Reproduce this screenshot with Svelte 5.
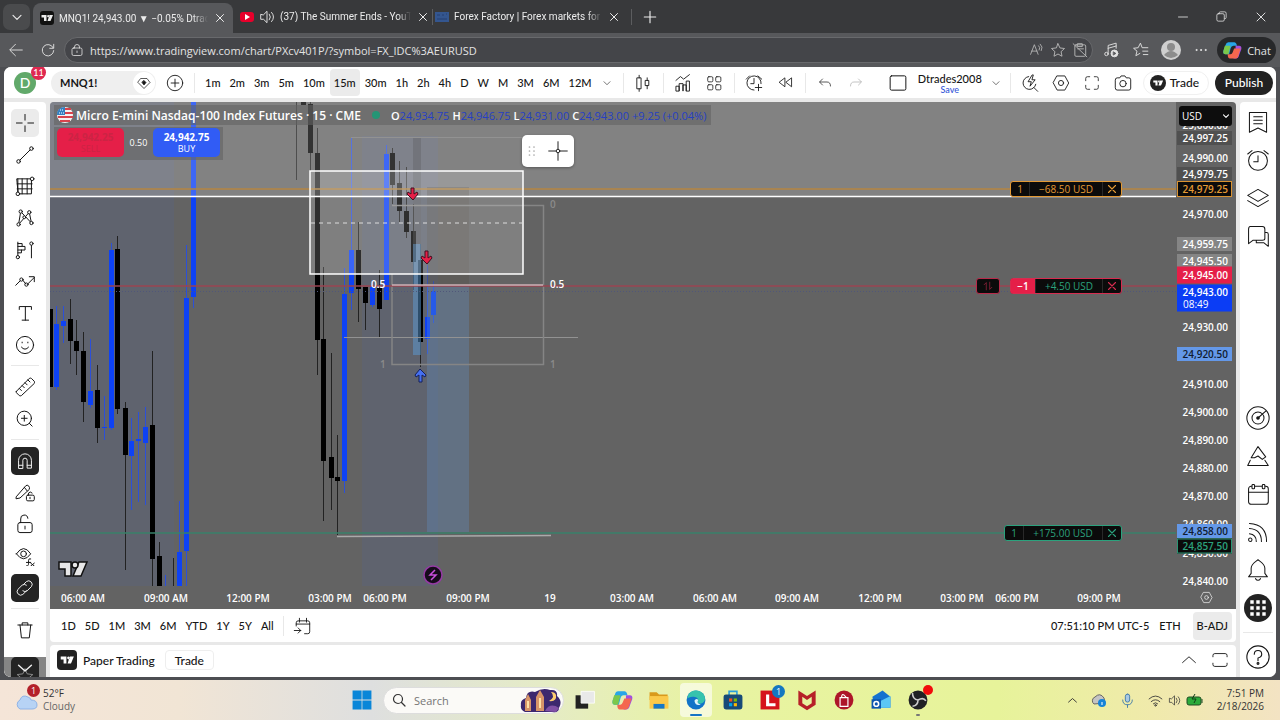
<script lang="ts">
	type Candle = [x: number, high: number, low: number, top: number, bottom: number, up: number];

	let interval = $state("15m");
	let search = $state("");
	let currency = $state("USD");

	const intervals = ["1m", "2m", "3m", "5m", "10m", "15m", "30m", "1h", "2h", "4h", "D", "W", "M", "3M", "6M", "12M"];
	const ranges = ["1D", "5D", "1M", "3M", "6M", "YTD", "1Y", "5Y", "All"];

	// x, high, low, body top, body bottom, up
	const candles: Candle[] = [
		[0, 207, 285, 207, 285, 0],
		[6, 204, 288, 222, 285, 1],
		[13, 204, 241, 219, 224, 1],
		[20, 197, 262, 217, 239, 0],
		[26, 218, 273, 239, 249, 0],
		[33, 230, 320, 249, 300, 0],
		[40, 237, 306, 289, 303, 1],
		[47, 263, 341, 288, 326, 0],
		[54, 294, 338, 325, 326, 1],
		[61, 141, 328, 148, 326, 1],
		[67, 134, 312, 147, 307, 0],
		[75, 300, 468, 306, 353, 0],
		[81, 316, 408, 339, 354, 1],
		[88, 310, 400, 337, 339, 1],
		[95, 305, 403, 325, 341, 1],
		[102, 249, 484, 323, 457, 0],
		[109, 440, 484, 454, 484, 0],
		[115, 473, 484, 484, 484, 1],
		[123, 456, 484, 484, 484, 0],
		[129, 399, 484, 450, 484, 1],
		[136, 143, 484, 196, 449, 1],
		[143, 0, 206, 0, 195, 1],
		[246, 0, 78, 0, 0, 0],
		[253, 0, 3, 0, 3, 0],
		[260, 0, 69, 2, 51, 0],
		[267, 26, 273, 51, 238, 0],
		[273, 165, 419, 237, 359, 0],
		[281, 251, 408, 355, 376, 0],
		[287, 333, 433, 375, 379, 0],
		[294, 166, 391, 192, 379, 1],
		[301, 36, 208, 148, 191, 1],
		[308, 120, 220, 148, 187, 0],
		[315, 185, 228, 185, 201, 0],
		[322, 178, 205, 185, 203, 1],
		[329, 168, 236, 186, 207, 0],
		[336, 43, 198, 52, 198, 1],
		[342, 46, 102, 51, 83, 0],
		[349, 59, 120, 81, 109, 0],
		[356, 65, 136, 109, 130, 0],
		[363, 102, 188, 129, 160, 0],
		[370, 142, 265, 158, 240, 0],
		[377, 163, 252, 215, 237, 1],
		[383, 179, 221, 189, 213, 1]
	];

	const hours: [number, string][] = [
		[33, "06:00 AM"],
		[116, "09:00 AM"],
		[198, "12:00 PM"],
		[280, "03:00 PM"],
		[335, "06:00 PM"],
		[418, "09:00 PM"],
		[500, "19"],
		[582, "03:00 AM"],
		[665, "06:00 AM"],
		[747, "09:00 AM"],
		[830, "12:00 PM"],
		[912, "03:00 PM"],
		[967, "06:00 PM"],
		[1049, "09:00 PM"]
	];

	const prices: [number, string][] = [
		[23, "25,000.00"],
		[56, "24,990.00"],
		[112, "24,970.00"],
		[225, "24,930.00"],
		[282, "24,910.00"],
		[310, "24,900.00"],
		[338, "24,890.00"],
		[366, "24,880.00"],
		[394, "24,870.00"],
		[422, "24,860.00"],
		[451, "24,850.00"],
		[479, "24,840.00"]
	];

	const marks: [number, string, string][] = [
		[36, "24,997.25", "dim"],
		[72, "24,979.75", "dim"],
		[87, "24,979.25", "orange"],
		[142, "24,959.75", "pale"],
		[159, "24,945.50", "pale"],
		[173, "24,945.00", "red"],
		[252, "24,920.50", "sky"],
		[444, "24,857.50", "green"],
		[429, "24,858.00", "sky"]
	];

	const tv = '<path fill="currentColor" stroke="none" d="M3 8h10v12H8v-7H3zM19 8h7l-5 12h-6zM16.500 8a2.300 2.300 0 1 0 .01 0z"/>';

	const icons: Record<string, string> = {
		tv,
		close: '<path d="M7 7l14 14M21 7L7 21"/>',
		down: '<path d="M7 11l7 7 7-7"/>',
		up: '<path d="M4 18l10-9 10 9"/>',
		plus: '<path d="M14 4v20M4 14h20"/>',
		back: '<path d="M25 14H4M13 4L3 14l10 10"/>',
		reload: '<path d="M23 10a10 10 0 1 0 1 5M24 4v7h-7"/>',
		lock: '<rect x="4" y="10" width="20" height="15" rx="3"/><path d="M9 10V8a5 5 0 0 1 10 0v2M14 16v3"/>',
		volume: '<path d="M3 10v8h5l6 6V4l-6 6zM18 9q4 5 0 10M22 6q7 8 0 16"/>',
		read: '<path d="M3 23l7-18 7 18M5 17h10M18 7q4 3 1 8M21 4q6 5 2 12"/>',
		star: '<path d="M14 3l3.400 7.400 8 1-6 5.500 1.600 8L14 21l-7 3.900 1.600-8-6-5.500 8-1z"/>',
		clip: '<rect x="5" y="5" width="19" height="20" rx="2"/><path d="M10 3h8v5h-8zM2 3l24 23M10 12h10"/>',
		music: '<path d="M9 21V6l14-4v9M9 11l14-4"/><circle cx="6" cy="21" r="3"/><circle cx="20" cy="20" r="6" fill="currentColor"/><path stroke="#58595c" fill="#58595c" d="M18.500 17.500l4 2.500-4 2.500z"/>',
		favorites: '<path d="M12 20l-7 4 2-8-6-5 8-1 4-8 3 8h10M17 16h9M18 22h8"/>',
		dots: '<g fill="currentColor"><circle cx="6" cy="14" r="1"/><circle cx="14" cy="14" r="1"/><circle cx="22" cy="14" r="1"/></g>',
		gem: '<path d="M8 5h12l6 8-12 12L2 13z"/><path fill="currentColor" d="M14 9l4 4-4 5-4-5z"/>',
		add: '<circle cx="14" cy="14" r="12"/><path d="M14 8v12M8 14h12"/>',
		candles: '<path d="M5 6h6v17H5zM8 2v4M8 23v4M18 10h5v8h-5zM20.500 6v4M20.500 18v5"/>',
		indicators: '<path d="M3 10l7-6 5 4 9-7M3 26v-7h5v7zM8 26V15h6v11M14 26V17h5v9M19 26V11h5v15z"/>',
		layouts: '<rect x="3" y="3" width="9" height="9" rx="2"/><rect x="17" y="3" width="9" height="9" rx="2"/><rect x="3" y="17" width="9" height="9" rx="2"/><rect x="17" y="17" width="9" height="9" rx="2"/>',
		alertadd: '<path d="M14 25a11 11 0 1 1 11-10M14 7v8h-5M21 16v10M16 21h10M2 8l5-5M20 3l6 5"/>',
		rewind: '<path d="M13 7v14L4 14zM24 7v14l-9-7z"/>',
		undo: '<path d="M9 6l-6 6 6 6M4 12h14q7 0 7 8"/>',
		redo: '<path d="M19 6l6 6-6 6M24 12H10q-7 0-7 8"/>',
		square: '<rect x="3" y="4" width="22" height="20" rx="2"/>',
		quick: '<path d="M12 4a10 10 0 1 0 11 12M20 21l6 6M17 2l-6 10h5l-2 7 8-10h-5l2-7z"/>',
		hex: '<path d="M8 3h12l6 11-6 11H8L2 14z"/><circle cx="14" cy="14" r="4"/>',
		full: '<path d="M3 10V6q0-3 3-3h4M18 3h4q3 0 3 3v4M25 18v4q0 3-3 3h-4M10 25H6q-3 0-3-3v-4"/>',
		camera: '<path d="M2 9q0-3 3-3h4l2-3h6l2 3h4q3 0 3 3v13q0 3-3 3H5q-3 0-3-3z"/><circle cx="14" cy="15" r="5"/>',
		cross: '<path d="M14 2v8M14 18v8M2 14h8M18 14h8"/>',
		line: '<path d="M7 21L21 7"/><circle cx="5" cy="23" r="2.500"/><circle cx="23" cy="5" r="2.500"/>',
		gann: '<path d="M3 4h20v21H5zM3 11h21M3 18h21M10 4v21M17 4v21M4 4v18"/><g fill="#fff"><circle cx="24" cy="4" r="2.500"/><circle cx="4" cy="25" r="2.500"/></g>',
		pattern: '<path d="M5 23L8 5l15 16L20 6 5 23"/><g fill="#fff"><circle cx="8" cy="5" r="2.300"/><circle cx="20" cy="6" r="2.300"/><circle cx="13" cy="13" r="2"/><circle cx="5" cy="23" r="2.300"/><circle cx="23" cy="21" r="2.300"/></g>',
		forecast: '<path d="M4 3v19M4 5h6v4h4v5H4M4 9h6M4 18h5v-4M23 7v18"/><g fill="#fff"><circle cx="4" cy="24" r="2.300"/><circle cx="23" cy="5" r="2.300"/></g>',
		arrows: '<path d="M1 20l6-6M11 13l4 5M18 18l9-9M20 8h7v7"/><circle cx="9" cy="12" r="2.300"/><circle cx="16" cy="19" r="2.300"/>',
		text: '<path d="M6 9V5h17v4M14.500 5v19M10 24h9"/>',
		smile: '<circle cx="14" cy="14" r="12"/><path d="M9 17q5 6 10 0M10 10v1M18 10v1"/>',
		ruler: '<path d="M2 20L20 2q2-1 3 0l4 4q1 1 0 3L9 26q-2 1-3 0l-4-4q-1-1 0-2zM6 16l3 3M10 12l3 3M14 8l3 3M18 4l3 3"/>',
		zoom: '<circle cx="13" cy="13" r="10"/><path d="M13 9v8M9 13h8M20 20l4 4"/>',
		magnet: '<path d="M5 24V13a9 9 0 0 1 18 0v11h-6V13a3 3 0 0 0-6 0v11zM5 20h6M17 20h6"/>',
		penlock: '<path d="M2 19L15 4q2-2 4 0t1 5L7 21l-5 1zM13 6l4 5"/><rect x="16" y="17" width="11" height="8" rx="2"/><path d="M19 17v-3q2-3 5 0M21 20v2"/>',
		unlock: '<rect x="4" y="12" width="20" height="14" rx="3"/><path d="M8 12V7a5 5 0 0 1 10-1M14 17v4"/>',
		eye: '<path d="M2 11q10-15 20 0Q12 25 2 11z"/><circle cx="12" cy="11" r="4"/><path d="M16 28q3 1 3-4v-4q0-3 3-2M16 23h6M22 24l5 4M27 24l-5 4"/>',
		link: '<path d="M12 9l4-4a5 5 0 0 1 7 7l-6 6a5 5 0 0 1-6 0M16 18l-5 5a5 5 0 0 1-7-7l6-6a5 5 0 0 1 6 0"/>',
		trash: '<path d="M4 7h20M7 7l2 18h11l2-18M10 7V4h8v3"/>',
		watch: '<path d="M4 3h20v23l-10-5-10 5zM9 8h10M9 12h10M9 16h10"/>',
		alarm: '<circle cx="14" cy="15" r="11"/><path d="M14 9v7H9M2 7l5-4M21 3l5 4"/>',
		layers: '<path d="M14 4l12 7-12 7L2 11zM2 17l12 7 12-7"/>',
		chat: '<path d="M5 3h14q3 0 3 3v11q0 2-3 2H8l-5 4V6q0-3 2-3zM22 10h2q2 0 2 2v14l-5-4h-9v-3"/>',
		target: '<circle cx="14" cy="14" r="13"/><circle cx="14" cy="14" r="7"/><path d="M14 14l9-8"/><circle cx="14" cy="14" r="1.500" fill="currentColor"/>',
		pyramid: '<path d="M14 3l9 12-4 3-5-4-4 2H6zM5 19l-3 6h24l-4-6"/>',
		calendar: '<rect x="3" y="5" width="23" height="21" rx="3"/><path d="M3 12h23"/><g fill="#fff"><rect x="7" y="3" width="3" height="5" rx="1"/><rect x="19" y="3" width="3" height="5" rx="1"/></g>',
		feed: '<circle cx="5" cy="23" r="2"/><path d="M4 16q8 1 8 9M4 10q14 1 14 15M4 4q20 1 20 21"/>',
		bell: '<path d="M3 22h22l-3-4v-6c0-5-4-7-8-10-4 3-8 5-8 10v6zM11 24q3 4 6 0"/>',
		help: '<circle cx="14" cy="14" r="12"/><path d="M10 11q0-4 4-4t4 4q0 3-4 4v3"/><circle cx="14" cy="21" r="1"/>',
		goto: '<path d="M5 14V9q0-3 3-3h15q3 0 3 3v14q0 3-3 3h-5M5 11h21M10 2v6M21 2v6M2 21h10M8 17l4 4-4 4"/>',
		expand: '<path d="M3 9V7q0-3 3-3h16q3 0 3 3v2M25 19v2q0 3-3 3H6q-3 0-3-3v-2"/>',
		grip: '<g fill="currentColor" stroke="none"><circle cx="9" cy="6" r="1.700"/><circle cx="18" cy="6" r="1.700"/><circle cx="9" cy="14" r="1.700"/><circle cx="18" cy="14" r="1.700"/><circle cx="9" cy="22" r="1.700"/><circle cx="18" cy="22" r="1.700"/></g>',
		point: '<path d="M14 1v10M14 17v10M1 14h10M17 14h10"/><circle cx="14" cy="14" r="2.500"/>',
		reverse: '<path d="M5 11l5-5v17M18 5v17l5-5"/>',
		search: '<circle cx="12" cy="12" r="9"/><path d="M19 19l7 7"/>',
		apps: '<path fill="currentColor" stroke="none" d="M5 5h4v4H5zM12 5h4v4h-4zM19 5h4v4h-4zM5 12h4v4H5zM12 12h4v4h-4zM19 12h4v4h-4zM5 19h4v4H5zM12 19h4v4h-4zM19 19h4v4h-4z"/>',
		hide: '<path stroke="#888" d="M14 11l3 7 8 1-6 5 2 7M14 11l-3 7-8 1 6 5-2 7"/><path d="M5 6l9 8 9-8" stroke-width="2"/>',
		minimize: '<path d="M5 14h18"/>',
		restore: '<rect x="4" y="8" width="16" height="16" rx="3"/><path d="M9 8V6q0-2 3-2h9q3 0 3 3v9q0 3-3 3"/>',
		mic: '<rect x="10" y="2" width="8" height="15" rx="4" fill="#a9c9e4"/><path d="M5 13q0 9 9 9t9-9M14 22v5"/>',
		wifi: '<path d="M2 11q12-11 24 0M6 16q8-7 16 0M10 20q4-4 8 0"/><circle cx="14" cy="23" r="1.500"/>'
	};

	const leftTools = ["cross", "line", "gann", "pattern", "forecast", "arrows", "text", "smile", "-", "ruler", "zoom", "-", "magnet", "penlock", "unlock", "eye", "link", "-", "trash"];
	const rightTop = ["watch", "alarm", "layers", "chat"];
	const rightBottom = ["target", "pyramid", "calendar", "feed", "bell", "apps"];

	const windows = '<path fill="#0a86d8" d="M2 2h11.500v11.500H2zM14.500 2H26v11.500H14.500zM2 14.500h11.500V26H2zM14.500 14.500H26V26H14.500z"/>';
	const copilot = '<path fill="#28a6e8" d="M9 3h8q3 0 4 5h-5q-3 0-4 4l-2 8H5q-4 0-3-5L5 7q1-4 4-4z"/><path fill="#7bc84b" d="M2 15l2-7h8l-3 12H5q-4 0-3-5z"/><path fill="#a24fe0" d="M19 8h5q4 0 3 5l-3 8q-1 5-5 5h-3l3-14z"/><path fill="#f4674f" d="M17 12h9l-3 10q-1 4-5 4h-7q-3 0-3-6h4q2 0 3-3z"/>';

	const tasks: [string, string][] = [
		["Task view", '<path fill="#222" d="M2 8h16v17H2z"/><path fill="#e9e9e9" stroke="#fff" d="M9 3h17v15H9z"/>'],
		["Copilot", copilot],
		["Files", '<path fill="#d99a1c" d="M2 4h9l3 3h11v7H2z"/><path fill="#fbc94a" d="M2 9h24v16H2z"/><path fill="#1678c8" d="M7 19h14v6H7z"/>'],
		["Edge", '<circle cx="14" cy="14" r="12" fill="#1273c8"/><path fill="#36c3ad" d="M3 12C4 4 10 2 14 2c8 0 13 7 11 13-2 4-8 5-9 2 3-4-2-8-6-7-4 0-6 2-7 2z"/><path fill="#dff5f7" d="M12 15q2-4 5-1-3 4 3 6-7 2-8-5z"/>'],
		["Store", '<path stroke="#2a9fdc" fill="none" stroke-width="2" d="M9 8V3h10v5"/><rect x="2" y="7" width="24" height="19" rx="3" fill="#174a78"/><path fill="#f25022" d="M9 12h4v4H9z"/><path fill="#7fba00" d="M15 12h4v4h-4z"/><path fill="#00a4ef" d="M9 18h4v4H9z"/><path fill="#ffb900" d="M15 18h4v4h-4z"/>'],
		["Lenovo", '<path fill="#d5141c" d="M2 2h24v24H2z"/><path fill="#fff" d="M9 7h4v11h8v4H9z"/>'],
		["McAfee", '<path fill="#b62028" d="M3 2l11 7 11-7v18l-11 7-11-7zM8 10v8l6 4 6-4v-8l-6 4z"/>'],
		["Shopping", '<circle cx="14" cy="14" r="12" fill="#ad1629"/><path fill="none" stroke="#fff" stroke-width="1.500" d="M9 11h10v11H9zM11 11q0-8 6 0"/>'],
		["Outlook", '<path fill="#1672cf" d="M3 10L16 2l10 8v14H6z"/><path fill="#5cc7f5" d="M14 15l12-6v15H8z"/><path fill="#0c56af" d="M2 13h12v12H2z"/><circle cx="8" cy="19" r="3" fill="none" stroke="#fff" stroke-width="2"/>'],
		["Studio", '<circle cx="14" cy="14" r="12" fill="#202124"/><path fill="none" stroke="#ccc" stroke-width="2" d="M14 14Q7 13 7 5M14 14q7-4 10 1M14 14q0 7-7 8"/>']
	];
</script>

{#snippet icon(name: string, size = 18)}
	<svg class="icon" width={size} height={size} viewBox="0 0 28 28" aria-hidden="true">{@html icons[name]}</svg>
{/snippet}

{#snippet art(shape: string, size = 20)}
	<svg width={size} height={size} viewBox="0 0 28 28" aria-hidden="true">{@html shape}</svg>
{/snippet}

<div class="screen">
	<header class="tabs">
		<button class="tab-menu" aria-label="Tab actions">{@render icon("down", 16)}</button>
		<div class="tab active">
			<span class="fav tvfav">{@render icon("tv", 14)}</span>
			<span class="tab-title">MNQ1! 24,943.00 ▼ −0.05% Dtrad</span>
			<button aria-label="Close tab">{@render icon("close", 14)}</button>
		</div>
		<div class="tab">
			<svg width="14" height="14" viewBox="0 0 14 14"><rect y="2" width="14" height="10" rx="3" fill="#e8002b" /><path d="M5 4l5 3-5 3z" fill="#fff" /></svg>
			{@render icon("volume", 16)}
			<span class="tab-title">(37) The Summer Ends - YouT</span>
			<button aria-label="Close tab">{@render icon("close", 14)}</button>
		</div>
		<div class="tab last">
			<svg width="14" height="14" viewBox="0 0 14 14"><path d="M0 2h14v10H0z" fill="#34568f" /><path d="M2 5h3M7 5h2M11 4h1M2 9h10" stroke="#253f70" /></svg>
			<span class="tab-title">Forex Factory | Forex markets for t</span>
			<button aria-label="Close tab">{@render icon("close", 14)}</button>
		</div>
		<button class="new-tab" aria-label="New tab">{@render icon("plus", 16)}</button>
		<div class="win">
			<button aria-label="Minimize">{@render icon("minimize", 14)}</button>
			<button aria-label="Restore">{@render icon("restore", 13)}</button>
			<button aria-label="Close">{@render icon("close", 16)}</button>
		</div>
	</header>

	<div class="address">
		<button aria-label="Back">{@render icon("back", 16)}</button>
		<button aria-label="Reload">{@render icon("reload", 16)}</button>
		<div class="field">
			{@render icon("lock", 14)}
			<input aria-label="Address" value="https://www.tradingview.com/chart/PXcv401P/?symbol=FX_IDC%3AEURUSD" />
			<div class="field-tools">
				{@render icon("read", 15)}
				{@render icon("star", 16)}
				{@render icon("clip", 16)}
			</div>
		</div>
		<div class="extras">
			<button aria-label="Media">{@render icon("music", 16)}</button>
			<button aria-label="Favorites">{@render icon("favorites", 16)}</button>
			<button aria-label="Profile">
				<svg width="20" height="20" viewBox="0 0 20 20"><circle cx="10" cy="10" r="10" fill="#cfcfcf" /><circle cx="10" cy="7" r="4" fill="#8c8c8c" /><path d="M3 15q7-8 14 0-7 6-14 0z" fill="#8c8c8c" /></svg>
			</button>
			<button aria-label="More">{@render icon("dots", 16)}</button>
		</div>
		<button class="copilot">{@render art(copilot, 20)} Chat</button>
	</div>

	<div class="app">
		<div class="topbar">
			<button class="avatar" aria-label="Account">D<span class="count">11</span></button>
			<div class="symbol"><button>MNQ1!</button><button class="gem" aria-label="Details">{@render icon("gem", 14)}</button></div>
			<button class="tool first" aria-label="Compare">{@render icon("add", 18)}</button>
			<i class="sep"></i>
			<div class="intervals">
				{#each intervals as item}
					<button class:on={interval === item} onclick={() => (interval = item)}>{item}</button>
				{/each}
				<button aria-label="More intervals">{@render icon("down", 12)}</button>
			</div>
			<i class="sep"></i>
			<button class="tool" aria-label="Chart type">{@render icon("candles")}</button>
			<i class="sep"></i>
			<button class="tool" aria-label="Indicators">{@render icon("indicators")}</button>
			<button class="tool" aria-label="Layouts">{@render icon("layouts", 16)}</button>
			<i class="sep"></i>
			<button class="tool" aria-label="Alert">{@render icon("alertadd")}</button>
			<button class="tool" aria-label="Replay">{@render icon("rewind", 17)}</button>
			<i class="sep"></i>
			<button class="tool" aria-label="Undo">{@render icon("undo", 14)}</button>
			<button class="tool faded" aria-label="Redo">{@render icon("redo", 14)}</button>
			<div class="top-right">
				<button class="tool" aria-label="Layout">{@render icon("square", 20)}</button>
				<button class="layout-name">Dtrades2008<small>Save</small></button>
				<button class="chev" aria-label="Layouts menu">{@render icon("down", 12)}</button>
				<i class="sep"></i>
				<button class="tool" aria-label="Quick search">{@render icon("quick")}</button>
				<button class="tool" aria-label="Settings">{@render icon("hex")}</button>
				<button class="tool" aria-label="Fullscreen">{@render icon("full", 16)}</button>
				<button class="tool" aria-label="Snapshot">{@render icon("camera")}</button>
				<button class="trade"><span>{@render icon("tv", 12)}</span>Trade</button>
				<button class="publish">Publish</button>
			</div>
		</div>

		<div class="workspace">
			<aside class="left">
				<div class="left-tools">
					{#each leftTools as tool}
						{#if tool === "-"}
							<i></i>
						{:else}
							<button class:on={tool === "cross"} class:dark={tool === "magnet" || tool === "link"} aria-label={tool}>{@render icon(tool, 20)}</button>
						{/if}
					{/each}
				</div>
				<div class="left-foot"><button class="dark" aria-label="Hide drawings">{@render icon("hide", 20)}</button></div>
			</aside>

			<main>
				<div class="chart">
					<div class="pane">
						<svg class="plot" width="100%" height="100%">
							<g fill="#55648c" fill-opacity="0.28">
								<rect width="124" height="484" />
								<rect x="312" y="34" width="76" height="450" />
							</g>
							<g>
								{#each candles as [x, high, low, top, bottom, up]}
									<line x1={x + 0.5} x2={x + 0.5} y1={high} y2={low} stroke={up ? "#2c50d8" : "#222"} />
									<rect x={x - 2} y={top} width="5" height={bottom - top} fill={up ? "#0e42f4" : "#000"} />
								{/each}
							</g>
							<rect width="100%" height="95" fill="#fff" fill-opacity="0.2" />
							<rect x="363" y="36" width="8" height="106" fill="#555" fill-opacity="0.3" />
							<rect x="363" y="142" width="8" height="111" fill="#5b9bd5" fill-opacity="0.5" />
							<rect x="377" y="85" width="42" height="98" fill="#555048" fill-opacity="0.35" />
							<rect x="377" y="184" width="42" height="246" fill="#5f92cc" fill-opacity="0.3" />
							<g fill="none" stroke="#929292">
								<path d="M301 35.500H473M294 235.500H528" />
								<path d="M342 103.500H493.500V262.500H342V172" stroke-width="1.500" stroke="#858585" />
							</g>
							<path d="M287 434.500L501 433.500" stroke="#aaa" stroke-width="1.500" />
							<line x2="100%" y1="87" y2="87" stroke="#b58440" stroke-width="1.500" />
							<rect x="260" y="69" width="213" height="103" fill="#fff" fill-opacity="0.18" stroke="#fff" stroke-width="1.500" />
							<line x1="261" x2="473" y1="121" y2="121" stroke="#ddd" stroke-dasharray="4 4" />
							<line x2="100%" y1="94.500" y2="94.500" stroke="#fff" stroke-width="1.500" />
							<line x2="100%" y1="184" y2="184" stroke="#9a4452" stroke-width="1.500" />
							<line x2="100%" y1="189.500" y2="189.500" stroke="#50577a" stroke-dasharray="1 2" />
							<line x1="342" x2="493" y1="183" y2="183" stroke="#cdb0b6" stroke-width="1.500" />
							<line x2="100%" y1="431" y2="431" stroke="#39806a" stroke-width="1.500" />
							<g fill="#e51f48" stroke="#421020">
								<path d="M361 86h3v6l3-2 1 2-5 6-6-6 1-2 3 2z" />
								<path d="M375 149h3v7l3-2 1 2-5 6-6-6 1-2 3 2z" />
							</g>
							<path d="M369 280h3v-7l3 2 1-2-6-6-5 6 1 2 3-2z" fill="#4670f0" stroke="#14205a" />
							<g class="level">
								<text x="321" y="186">0.5</text><text x="500" y="186">0.5</text>
								<text class="grey" x="500" y="106">0</text>
								<text class="grey" x="330" y="266">1</text><text class="grey" x="500" y="266">1</text>
							</g>
							<circle cx="383" cy="473" r="9" fill="#160b1b" stroke="#963aa5" stroke-width="1.500" />
							<path d="M385 468l-5 5h6l-5 5" fill="none" stroke="#c94fdc" stroke-width="1.500" />
							<g transform="translate(9 459)" fill="#e8e8e8" stroke="#111" stroke-width="1.500">
								<path d="M0 1h12v14H6V8H0zM20 1h8l-6 14h-8z" /><circle cx="16" cy="4" r="3" />
							</g>
						</svg>

						<div class="legend">
							<svg width="16" height="16" viewBox="0 0 16 16"><circle cx="8" cy="8" r="8" fill="#f6f1f1" /><path d="M8 2h6M8 6h8M1 10h15M3 14h10" stroke="#d8434c" stroke-width="2" /><path d="M0 8q0-8 8-8v8z" fill="#327fc0" /><path d="M2 6h5M3 3h4" stroke="#fff" stroke-dasharray="1 1" /></svg>
							<h1>Micro E-mini Nasdaq-100 Index Futures · 15 · CME</h1>
							<i></i>
							<span>O<b>24,934.75</b></span><span>H<b>24,946.75</b></span><span>L<b>24,931.00</b></span><span>C<b>24,943.00</b></span><span><b>+9.25 (+0.04%)</b></span>
						</div>
						<div class="deal">
							<button class="sell"><b>24,942.25</b>SELL</button>
							<span>0.50</span>
							<button class="buy"><b>24,942.75</b>BUY</button>
						</div>
						<div class="floating">
							<span>{@render icon("grip", 14)}</span>
							<button aria-label="Crosshair">{@render icon("point", 20)}</button>
						</div>

						<div class="order orange" style:top="79px"><span>1</span><span class="sum">−68.50 USD</span><button aria-label="Cancel order">{@render icon("close", 14)}</button></div>
						<div class="order position" style:top="176px"><span class="qty">−1</span><span class="sum">+4.50 USD</span><button aria-label="Close position">{@render icon("close", 14)}</button></div>
						<button class="reverse" aria-label="Reverse position">{@render icon("reverse", 12)}</button>
						<div class="order green" style:top="423px"><span>1</span><span class="sum">+175.00 USD</span><button aria-label="Cancel order">{@render icon("close", 14)}</button></div>
					</div>

					<div class="scale">
						{#each prices as [y, price]}
							<span class="price" style:top="{y}px">{price}</span>
						{/each}
						{#each marks as [y, price, kind]}
							<span class="price mark {kind}" style:top="{y}px">{price}</span>
						{/each}
						<span class="price mark now">24,943.00<small>08:49</small></span>
						<select aria-label="Currency" bind:value={currency}><option>USD</option><option>EUR</option></select>
						<span class="select-arrow">{@render icon("down", 10)}</span>
					</div>

					<div class="times">
						{#each hours as [x, label]}
							<span style:left="{x}px">{label}</span>
						{/each}
					</div>
					<button class="axis-settings" aria-label="Axis settings">{@render icon("hex", 13)}</button>
				</div>

				<div class="rangebar">
					{#each ranges as range}<button>{range}</button>{/each}
					<i class="sep"></i>
					<button class="goto" aria-label="Go to date">{@render icon("goto")}</button>
					<div class="session">
						<button>07:51:10 PM UTC-5</button><button>ETH</button><button class="adj">B-ADJ</button>
					</div>
				</div>

				<div class="tradebar">
					<span class="badge">{@render icon("tv", 16)}</span>
					<button>Paper Trading</button>
					<button class="outlined">Trade</button>
					<div class="panel-tools">
						<button aria-label="Open panel">{@render icon("up", 18)}</button>
						<button aria-label="Maximize panel">{@render icon("expand")}</button>
					</div>
				</div>
			</main>

			<aside class="right">
				{#each rightTop as tool}<button aria-label={tool}>{@render icon(tool, 24)}</button>{/each}
				<div class="gap"></div>
				{#each rightBottom as tool}<button class:round={tool === "apps"} aria-label={tool}>{@render icon(tool, 24)}</button>{/each}
				<i></i>
				<button aria-label="Help">{@render icon("help", 26)}</button>
			</aside>
		</div>
	</div>

	<footer>
		<button class="weather">
			<span class="cloud">
				<svg width="22" height="22" viewBox="0 0 22 22"><path d="M4 20a5 5 0 0 1 0-9q2-6 8-3 3 1 3 3 6 0 6 5 0 4-5 4z" fill="#b7d3f5" stroke="#8fb3e6" /></svg>
				<em>1</em>
			</span>
			<span>52°F<small>Cloudy</small></span>
		</button>
		<div class="tasks">
			<button aria-label="Start">{@render art(windows, 22)}</button>
			<label class="search">
				{@render icon("search", 14)}
				<input placeholder="Search" aria-label="Search" bind:value={search} />
				<svg width="42" height="25" viewBox="0 0 42 25" aria-hidden="true">
					<path d="M1 17q-1-5 5-7Q7 2 15 4q8-5 15-2 8-1 7 6 6 5 2 12 0 5-7 4H5q-5-2-4-7z" fill="#3c286e" />
					<path d="M5 23V12l3-6 3 6v11zM16 23V9l4-7 4 7v14z" fill="#d79468" /><path d="M8 13v7M20 10v10" stroke="#ffe0a5" stroke-width="2" />
					<path d="M31 4q5 5-2 9 8 1 7-6-1-3-5-3z" fill="#ffcf70" /><path d="M25 23q5-9 14-3l-3 4z" fill="#8051a5" />
				</svg>
			</label>
			{#each tasks as [name, shape]}
				<button class:current={name === "Edge"} class:running={name === "Studio"} aria-label={name}>
					{@render art(shape, 22)}
					{#if name === "Lenovo"}<em>1</em>{/if}
					{#if name === "Studio"}<em class="rec"></em>{/if}
				</button>
			{/each}
		</div>
		<div class="tray">
			<button aria-label="Hidden icons">{@render icon("up", 11)}</button>
			<button aria-label="Cloud sync"><svg width="16" height="16" viewBox="0 0 16 16"><path d="M3 12a4 4 0 0 1 1-7q5-5 9 1l1 5z" fill="#c4c4c4" stroke="#666" /><circle cx="11" cy="11" r="4" fill="#1684d8" /><path d="M11 10v3" stroke="#fff" /></svg></button>
			<button class="mic" aria-label="Microphone">{@render icon("mic", 15)}</button>
			<div class="status">{@render icon("wifi", 15)}{@render icon("volume", 13)}
				<svg width="17" height="12" viewBox="0 0 17 12"><rect x="1" y="3" width="14" height="8" rx="2" fill="#2bab3b" stroke="#204d24" /><path d="M16 5v4" stroke="#204d24" /><path d="M9 0L6 5h4L8 9" fill="none" stroke="#123b17" /></svg>
			</div>
			<button class="clock">7:51 PM<br />2/18/2026</button>
		</div>
	</footer>
</div>

<style>
	:global(body) {
		margin: 0;
		background: #4d4e52;
	}
	* {
		box-sizing: border-box;
	}
	.screen {
		display: flex;
		flex-direction: column;
		height: 100vh;
		overflow: hidden;
		font-family: "Open Sans", "Noto Sans", sans-serif;
		font-size: 11px;
		color: #161616;
	}
	button,
	input,
	select {
		font: inherit;
		color: inherit;
		background: none;
		border: 0;
		padding: 0;
		margin: 0;
	}
	button {
		display: flex;
		align-items: center;
		justify-content: center;
		flex-shrink: 0;
		white-space: nowrap;
		cursor: pointer;
	}
	svg {
		display: block;
		flex-shrink: 0;
	}
	.icon {
		fill: none;
		stroke: currentColor;
		stroke-width: 1.6;
		stroke-linecap: round;
		stroke-linejoin: round;
	}

	/* browser */
	.tabs {
		display: flex;
		align-items: center;
		flex: 0 0 33px;
		background: #38393b;
		color: #ececec;
		padding-left: 3px;
		font-family: Roboto, "Open Sans", sans-serif;
		font-size: 10px;
	}
	.tab-menu {
		width: 27px;
		height: 26px;
		margin-right: 3px;
		border-radius: 7px;
		background: #4a4b4d;
	}
	.tab {
		display: flex;
		align-items: center;
		gap: 5px;
		width: 203px;
		height: 30px;
		padding: 0 6px 0 7px;
	}
	.tab.active {
		width: 200px;
		align-self: flex-end;
		background: #57585b;
		border-radius: 8px 8px 0 0;
	}
	.tab.last {
		width: 200px;
		border: solid #5c5d5f;
		border-width: 0 1px;
		height: 16px;
		padding: 0 10px 0 2px;
		margin-left: -4px;
	}
	.tab-title {
		flex: 1;
		overflow: hidden;
		white-space: nowrap;
		mask-image: linear-gradient(90deg, #000 90%, transparent);
	}
	.tvfav {
		background: #111;
		border-radius: 3px;
	}
	.new-tab {
		width: 36px;
	}
	.tab-menu .icon,
	.tab button .icon,
	.new-tab .icon {
		stroke-width: 2;
	}
	.win {
		display: flex;
		margin-left: auto;
	}
	.win button {
		width: 39px;
	}
	.address {
		display: flex;
		align-items: center;
		flex: 0 0 34px;
		background: #57585b;
		color: #e3e3e3;
	}
	.address > button {
		width: 32px;
	}
	.field {
		display: flex;
		align-items: center;
		flex: 1;
		gap: 6px;
		height: 26px;
		padding: 0 4px 0 5px;
		border: 1px solid #68696c;
		border-radius: 13px;
		background: #444549;
	}
	.field-tools {
		display: flex;
		gap: 6px;
		color: #b9b9b9;
	}
	.field input {
		flex: 1;
		min-width: 0;
		outline: 0;
	}
	.extras {
		display: flex;
		padding: 0 0 0 3px;
	}
	.extras button {
		width: 30px;
	}
	.address .copilot {
		gap: 5px;
		width: 59px;
		height: 26px;
		margin: 0 4px 0 1px;
		border-radius: 13px;
		background: #27282a;
	}

	/* trading app */
	.app {
		display: flex;
		flex-direction: column;
		flex: 1;
		min-height: 0;
		gap: 4px;
		margin: 0 4px 3px;
		border-radius: 7px;
		overflow: hidden;
		background: #e8e8e8;
		font-family: Lato, "Open Sans", sans-serif;
		font-size: 12px;
		font-weight: 500;
	}
	.app .icon {
		stroke-width: 1.4;
	}
	.topbar {
		display: flex;
		align-items: center;
		flex: 0 0 31px;
		padding: 0 3px 0 10px;
		background: #fff;
	}
	.avatar {
		position: relative;
		width: 22px;
		height: 22px;
		margin-right: 15px;
		border-radius: 50%;
		background: #61a96a;
		color: #fff;
		font-size: 14px;
	}
	.count {
		position: absolute;
		top: -7px;
		right: -10px;
		width: 15px;
		height: 15px;
		border-radius: 50%;
		background: #df2850;
		font-size: 9px;
		line-height: 15px;
	}
	.symbol {
		display: flex;
		align-items: center;
		justify-content: space-between;
		flex: 0 0 105px;
		height: 24px;
		padding: 0 1px 0 9px;
		border-radius: 12px;
		background: #efefef;
		font-size: 11px;
		font-weight: 700;
	}
	.gem {
		width: 22px;
		height: 22px;
		border-radius: 50%;
		background: #fff;
	}
	.tool {
		width: 31px;
		height: 28px;
	}
	.tool.first {
		margin-left: 3px;
	}
	.faded {
		color: #aaa;
	}
	.sep {
		flex-shrink: 0;
		width: 1px;
		height: 20px;
		margin: 0 4px;
		background: #e8e8e8;
	}
	.intervals {
		display: flex;
		gap: 1px;
		padding: 0 2px;
		font-size: 11px;
	}
	.intervals button {
		height: 27px;
		padding: 0 4px;
		border-radius: 4px;
	}
	.intervals .on {
		background: #ebebeb;
	}
	.top-right {
		display: flex;
		align-items: center;
		margin-left: auto;
	}
	.layout-name {
		flex-direction: column;
		padding: 0 4px;
		font-size: 11px;
		line-height: 13px;
	}
	.layout-name small {
		font-size: 9px;
		line-height: 9px;
		color: #3657d9;
	}
	.chev {
		width: 20px;
	}
	.trade {
		gap: 4px;
		height: 24px;
		margin: 0 6px 0 4px;
		padding: 0 9px 0 6px;
		border: 1px solid #f0f0f0;
		border-radius: 12px;
	}
	.trade span {
		padding: 2px;
		border-radius: 50%;
		background: #222;
		color: #fff;
	}
	.publish {
		width: 58px;
		height: 24px;
		border-radius: 12px;
		background: #222;
		color: #fff;
	}
	.workspace {
		display: flex;
		flex: 1;
		gap: 4px;
		min-height: 0;
	}
	.left {
		display: flex;
		flex-direction: column;
		width: 42px;
		background: #fff;
		border-radius: 0 4px 0 0;
	}
	.left-tools {
		display: flex;
		flex-direction: column;
		justify-content: space-between;
		flex: 1;
		padding: 7px 7px 13px;
	}
	.left button {
		width: 28px;
		height: 28px;
		border-radius: 5px;
	}
	.left i {
		height: 1px;
		margin: 3px 0;
		background: #e8e8e8;
	}
	.left .on {
		background: #ebebeb;
	}
	.left .dark {
		background: #242424;
		color: #eee;
	}
	.left-foot {
		height: 20px;
		padding: 0 7px;
		overflow: hidden;
		background: #858585;
	}
	main {
		display: flex;
		flex-direction: column;
		flex: 1;
		min-width: 0;
		gap: 3px;
	}
	.chart {
		display: grid;
		grid-template: minmax(0, 1fr) 23px / minmax(0, 1fr) 60px;
		flex: 1;
		min-height: 0;
		margin-bottom: -3px;
		background: #636363;
		border-radius: 4px 4px 0 0;
		overflow: hidden;
		color: #fff;
		font-family: "Open Sans", sans-serif;
	}
	.pane,
	.scale,
	.times {
		position: relative;
		overflow: hidden;
	}
	.plot {
		position: absolute;
		inset: 0;
	}
	.level {
		fill: #fff;
		font-size: 10px;
		font-weight: 600;
	}
	.level .grey {
		fill: #8b8b8b;
	}
	.legend {
		position: absolute;
		top: 3px;
		left: 4px;
		display: flex;
		align-items: center;
		gap: 3px;
		height: 20px;
		padding: 0 5px 0 3px;
		background: rgba(99, 99, 99, 0.6);
		font-size: 11px;
		font-weight: 600;
		white-space: nowrap;
	}
	.legend h1 {
		margin: 0;
		font-size: 12px;
		font-weight: 600;
	}
	.legend i {
		width: 8px;
		height: 8px;
		margin: 0 8px;
		border-radius: 50%;
		background: #249575;
	}
	.legend b {
		color: #263fc4;
		font-weight: 400;
	}
	.deal {
		position: absolute;
		top: 25px;
		left: 4px;
		display: flex;
		align-items: center;
		padding: 0 3px 2px;
		height: 33px;
		background: rgba(99, 99, 99, 0.6);
		font-size: 9px;
	}
	.deal span {
		width: 29px;
		text-align: center;
	}
	.deal button {
		flex-direction: column;
		width: 67px;
		height: 29px;
		border-radius: 5px;
		line-height: 12px;
	}
	.deal b {
		font-size: 10px;
	}
	.sell {
		background: #e51f48;
		color: #cb2444;
	}
	.buy {
		background: #315cf5;
	}
	.floating {
		position: absolute;
		left: 472px;
		top: 33px;
		display: flex;
		align-items: center;
		gap: 9px;
		width: 52px;
		height: 32px;
		padding-left: 3px;
		border-radius: 5px;
		background: #fff;
		color: #222;
		box-shadow: 0 1px 3px #0005;
	}
	.floating span {
		color: #aaa;
	}
	.order,
	.reverse {
		position: absolute;
		right: 54px;
		display: flex;
		height: 16px;
		border: 1px solid currentColor;
		border-radius: 3px;
		background: #0b0b0b;
		font-size: 10px;
		line-height: 14px;
		text-align: center;
	}
	.order > span:first-child {
		width: 18px;
	}
	.order .sum {
		width: 74px;
		border: solid #292929;
		border-width: 0 1px;
	}
	.order button {
		width: 18px;
	}
	.order button .icon {
		stroke-width: 2.2;
	}
	.orange {
		color: #e39a35;
	}
	.position {
		color: #d62c50;
	}
	.order.position .qty {
		width: 24px;
		background: #e51f48;
		color: #fff;
		font-weight: 600;
	}
	.order.position .sum {
		width: 68px;
	}
	.position .sum,
	.green {
		color: #2ba27d;
	}
	.order.green .sum {
		width: 80px;
	}
	.reverse {
		top: 176px;
		right: 176px;
		width: 24px;
		color: #b82a4a;
	}
	.price {
		position: absolute;
		left: 1px;
		width: 55px;
		height: 14px;
		padding-right: 4px;
		transform: translateY(-50%);
		font-size: 10px;
		font-weight: 600;
		line-height: 14px;
		text-align: right;
	}
	.dim {
		background: #505050;
	}
	.pale {
		background: #858585;
	}
	.red {
		height: 17px;
		line-height: 17px;
		background: #e51f48;
	}
	.sky {
		background: #6498e8;
		color: #101b30;
	}
	.mark.orange {
		height: 16px;
		background: #0b0b0b;
		border: 1px solid #d99231;
		padding-right: 3px;
	}
	.mark.green {
		height: 15px;
		background: #0b0b0b;
		border: 1px solid #299473;
		padding-right: 3px;
		line-height: 13px;
	}
	.now {
		top: 196px;
		height: 27px;
		background: #0b3df5;
	}
	.now small {
		display: block;
		padding-left: 6px;
		font-size: 10px;
		font-weight: 400;
		line-height: 10px;
		text-align: left;
	}
	select {
		position: absolute;
		top: 4px;
		left: 3px;
		width: 53px;
		height: 20px;
		padding-left: 3px;
		border-radius: 3px;
		background: #0d0d0d;
		appearance: none;
		font-size: 10px;
	}
	.select-arrow {
		position: absolute;
		top: 9px;
		right: 5px;
		pointer-events: none;
	}
	.select-arrow .icon {
		stroke-width: 3;
	}
	.times span {
		position: absolute;
		top: 5px;
		transform: translateX(-50%);
		font-size: 10px;
		font-weight: 600;
		line-height: 15px;
		white-space: nowrap;
	}
	.rangebar,
	.tradebar {
		display: flex;
		align-items: center;
		flex: 0 0 33px;
		background: #fff;
	}
	.rangebar {
		gap: 9px;
		padding: 0 4px 0 11px;
		border-radius: 0 0 4px 4px;
		font-size: 11px;
	}
	.rangebar .sep {
		margin: 0;
	}
	.session,
	.panel-tools {
		display: flex;
		align-items: center;
		gap: 10px;
		margin-left: auto;
	}
	.adj {
		height: 28px;
		margin-left: 2px;
		padding: 0 4px;
		border-radius: 4px;
		background: #ebebeb;
	}
	.tradebar {
		flex-basis: 32px;
		padding: 0 7px 2px;
		border-radius: 4px 4px 0 0;
	}
	.badge {
		padding: 2px;
		margin-right: 6px;
		border-radius: 4px;
		background: #222;
		color: #fff;
	}
	.outlined {
		height: 20px;
		margin-left: 10px;
		padding: 0 9px;
		border: 1px solid #eee;
		border-radius: 4px;
	}
	.panel-tools {
		gap: 13px;
	}
	.right {
		display: flex;
		flex-direction: column;
		align-items: center;
		gap: 10px;
		width: 36px;
		padding: 6px 0;
		background: #fff;
		border-radius: 4px 0 0 0;
	}
	.right .icon {
		stroke-width: 1.2;
	}
	.right button {
		width: 28px;
		height: 28px;
	}
	.right .round {
		border-radius: 50%;
		background: #222;
		color: #fff;
	}
	.right .gap {
		flex: 1;
	}
	.right i {
		width: 30px;
		height: 1px;
		background: #e8e8e8;
	}

	/* taskbar */
	footer {
		display: grid;
		grid-template-columns: 1fr auto 1fr;
		align-items: center;
		flex: 0 0 40px;
		background: linear-gradient(90deg, #f5e5d8, #f1e5d5 14%, #dedfdf 29%, #e5ebc7 42%, #e8f3a2 55%, #e7f39a 78%, #f0eaab 90%, #f3e3c3);
		color: #333;
	}
	.weather {
		justify-self: start;
		gap: 5px;
		padding-left: 16px;
		text-align: left;
		line-height: 13px;
		font-size: 10px;
	}
	.weather small {
		display: block;
		font-size: 10px;
		color: #666;
	}
	.cloud {
		position: relative;
	}
	em {
		position: absolute;
		top: -5px;
		right: -2px;
		width: 13px;
		height: 13px;
		border-radius: 50%;
		background: #b3202a;
		color: #fff;
		font-size: 9px;
		font-style: normal;
		line-height: 13px;
		text-align: center;
	}
	.tasks {
		display: flex;
		align-items: center;
		gap: 5px;
	}
	.tasks button {
		position: relative;
		width: 32px;
		height: 34px;
		border-radius: 4px;
	}
	.tasks em {
		top: 2px;
		right: 1px;
		background: #1477c0;
	}
	.tasks .rec {
		width: 10px;
		height: 10px;
		background: #f10b0b;
	}
	.current {
		background: #fff9;
	}
	.current::after,
	.running::after {
		content: "";
		position: absolute;
		bottom: 1px;
		width: 12px;
		height: 2px;
		border-radius: 1px;
		background: #1575c4;
	}
	.running::after {
		width: 4px;
		background: #777;
	}
	.search {
		display: flex;
		align-items: center;
		gap: 8px;
		width: 181px;
		height: 27px;
		padding: 0 1px 0 8px;
		border-radius: 14px;
		background: #fbfaf7;
		border: 1px solid #ddd;
	}
	.search .icon,
	.tray button:first-child .icon {
		stroke-width: 2.4;
	}
	.search input {
		flex: 1;
		min-width: 0;
		outline: 0;
	}
	.tray {
		display: flex;
		align-items: center;
		justify-self: end;
		gap: 13px;
		padding-right: 16px;
	}
	.mic {
		color: #3674a8;
	}
	.status {
		display: flex;
		align-items: center;
		gap: 5px;
	}
	.clock {
		width: 48px;
		justify-content: flex-end;
		text-align: right;
		font-size: 10px;
		line-height: 13px;
	}
</style>
